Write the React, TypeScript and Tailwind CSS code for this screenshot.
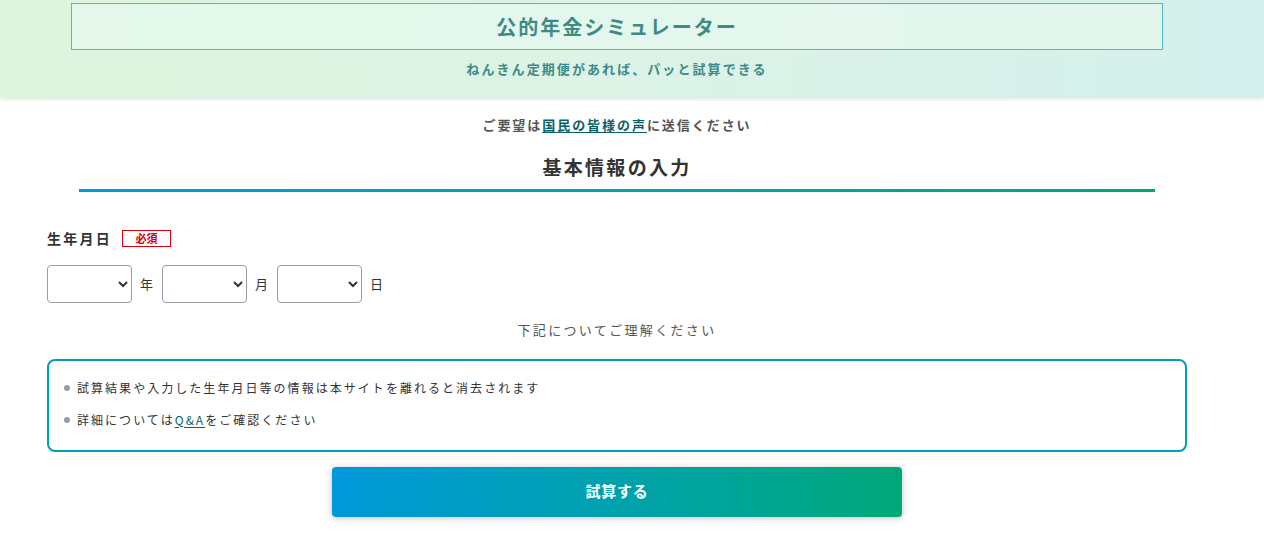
import { useState } from "react";

const font = { fontFamily: '"Noto Sans CJK JP", "Noto Sans", sans-serif' };

function DateSelect({ label }: { label: string }) {
  return (
    <div className="flex items-center">
      <select className="h-[38px] w-[85px] rounded-[4px] border border-[#9b9ba8] bg-white px-2 text-sm text-[#333] outline-none">
        <option value=""></option>
      </select>
      <span className="ml-[8px] mr-[9px] text-[13px] text-[#333]">{label}</span>
    </div>
  );
}

export default function App() {
  const [notes] = useState([
    "試算結果や入力した生年月日等の情報は本サイトを離れると消去されます",
  ]);

  return (
    <div className="min-h-[557px] w-full bg-white" style={font}>
      <header className="h-[97px] w-full bg-gradient-to-r from-[#dcf5dc] via-[#dcf3e6] to-[#d4efec] pt-[3px] shadow-[0_2px_4px_rgba(0,0,0,0.12)]">
        <div className="ml-[71px] w-[1092px]">
          <div className="flex h-[47px] items-center justify-center border border-[#52b8c6] bg-[#e6f7ee]/80">
            <h1 className="text-[20px] font-bold tracking-[0.1em] text-[#3d8a86]">
              公的年金シミュレーター
            </h1>
          </div>
          <p className="mt-[9px] text-center text-[13px] font-bold tracking-[0.16em] text-[#3d8a86]">
            ねんきん定期便があれば、パッと試算できる
          </p>
        </div>
      </header>

      <main className="ml-[47px] w-[1140px]">
        <p className="mt-[18px] text-center text-[13px] font-bold tracking-[0.15em] text-[#555]">
          ご要望は
          <a href="#" className="text-[#0b5f67] underline underline-offset-2">
            国民の皆様の声
          </a>
          に送信ください
        </p>

        <div className="mx-[32px] mt-[18px]">
          <h2 className="text-center text-[19px] font-bold tracking-[0.12em] text-[#333]">
            基本情報の入力
          </h2>
          <div className="mt-[8px] h-[3px] w-full bg-gradient-to-r from-[#0098d8] to-[#00a87a]" />
        </div>

        <div className="mt-[36px] flex items-center">
          <span className="text-[14px] font-bold tracking-[0.16em] text-[#333]">生年月日</span>
          <span className="ml-[10px] flex h-[17px] w-[49px] items-center justify-center border border-[#d8000c] text-[11px] font-bold leading-none text-[#d8000c]">
            必須
          </span>
        </div>

        <div className="mt-[16px] flex items-center">
          <DateSelect label="年" />
          <DateSelect label="月" />
          <DateSelect label="日" />
        </div>

        <p className="mt-[17px] text-center text-[13px] tracking-[0.18em] text-[#555]">
          下記についてご理解ください
        </p>

        <div className="mt-[19px] h-[93px] rounded-[8px] border-2 border-[#009fb7] px-[15px] pt-[18px]">
          <ul className="flex flex-col gap-[14px]">
            {notes.map((n) => (
              <li key={n} className="flex items-center text-[12px] tracking-[0.17em] text-[#333]">
                <span className="mr-[7px] h-[6px] w-[6px] rounded-full bg-[#9a9aab]" />
                {n}
              </li>
            ))}
            <li className="flex items-center text-[12px] tracking-[0.17em] text-[#333]">
              <span className="mr-[7px] h-[6px] w-[6px] rounded-full bg-[#9a9aab]" />
              詳細については
              <a href="#" className="text-[#0b5f67] underline underline-offset-2">
                Q&amp;A
              </a>
              をご確認ください
            </li>
          </ul>
        </div>

        <div className="mt-[15px] flex justify-center">
          <button className="h-[50px] w-[570px] rounded-[4px] bg-gradient-to-r from-[#0098da] to-[#00a878] text-[15px] font-bold tracking-[0.05em] text-white shadow-[0_1px_6px_rgba(0,0,0,0.25)]">
            試算する
          </button>
        </div>
      </main>
    </div>
  );
}
